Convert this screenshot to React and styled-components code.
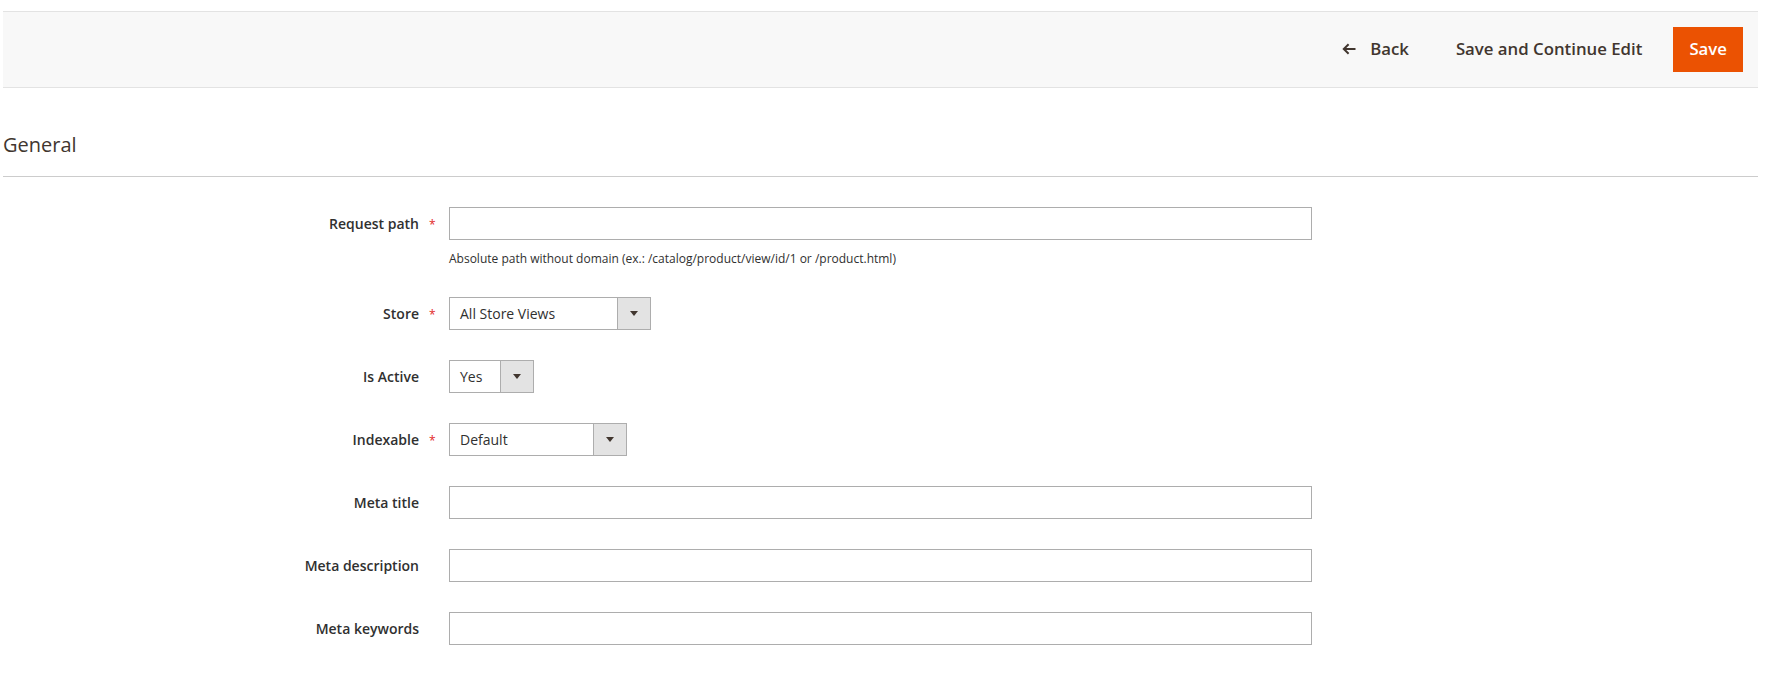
import React from "react";
import styled, { createGlobalStyle } from "styled-components";

const GlobalStyle = createGlobalStyle`
  html, body { margin: 0; padding: 0; background: #ffffff; }
  body {
    font-family: "Open Sans", "Noto Sans", Arial, sans-serif;
    color: #303030;
    font-size: 14px;
  }
  * { box-sizing: border-box; }
`;

const Page = styled.div`
  padding: 11px 11px 0 3px;
`;

const ActionsBar = styled.div`
  height: 77px;
  background: #f8f8f8;
  border-top: 1px solid #e3e3e3;
  border-bottom: 1px solid #e3e3e3;
  display: flex;
  align-items: center;
  justify-content: flex-end;
  gap: 15px;
  padding-right: 15px;
`;

const TextButton = styled.button`
  display: inline-flex;
  align-items: center;
  gap: 14px;
  border: 0;
  background: transparent;
  padding: 0 16px 2px;
  height: 45px;
  font-family: inherit;
  font-size: 16.8px;
  font-weight: 600;
  color: #41362f;
  cursor: pointer;
`;

const PrimaryButton = styled.button`
  height: 45px;
  border: 0;
  background: #eb5202;
  color: #ffffff;
  padding: 0 16px 2px;
  font-family: inherit;
  font-size: 16.8px;
  font-weight: 600;
  cursor: pointer;
`;

const SectionTitle = styled.h2`
  margin: 43px 0 0;
  padding: 0 0 17px;
  font-size: 20px;
  line-height: 28px;
  font-weight: 400;
  color: #41362f;
  border-bottom: 1px solid #cccccc;
`;

const Fieldset = styled.div`
  padding-top: 30px;
  display: flex;
  flex-direction: column;
  gap: 30px;
`;

const FieldRow = styled.div`
  display: grid;
  grid-template-columns: 416px 863px;
  column-gap: 30px;
  align-items: start;
`;

const Label = styled.label`
  text-align: right;
  font-size: 14px;
  font-weight: 600;
  color: #303030;
  line-height: 33px;
`;

const LabelText = styled.span`
  display: inline-block;
  position: relative;
  line-height: 33px;
  ${(p) =>
    p.$required &&
    `
    &::after {
      content: '*';
      position: absolute;
      left: calc(100% + 10px);
      top: 12px;
      font-size: 12px;
      line-height: 12px;
      font-weight: 400;
      color: #e22626;
    }
  `}
`;

const Control = styled.div`
  display: flex;
  flex-direction: column;
`;

const TextInput = styled.input`
  width: 100%;
  height: 33px;
  border: 1px solid #adadad;
  background: #ffffff;
  padding: 0 10px;
  font-family: inherit;
  font-size: 14px;
  color: #303030;
  outline: none;
`;

const Note = styled.div`
  margin-top: 10px;
  font-size: 12px;
  line-height: 17px;
  color: #303030;
`;

const SelectBox = styled.div`
  width: ${(p) => p.$width}px;
  height: 33px;
  border: 1px solid #adadad;
  background: #ffffff;
  display: flex;
  align-items: stretch;
`;

const SelectValue = styled.span`
  flex: 1;
  display: flex;
  align-items: center;
  padding: 0 10px;
  font-size: 14px;
  color: #303030;
  white-space: nowrap;
`;

const SelectArrow = styled.span`
  width: 33px;
  flex: none;
  background: #e3e3e3;
  border-left: 1px solid #adadad;
  display: flex;
  align-items: center;
  justify-content: center;
`;

function BackArrow() {
  return (
    <svg width="14" height="12" viewBox="0 0 14 12" fill="none">
      <path
        d="M13.5 6H2.2M6.6 1.3L1.8 6l4.8 4.7"
        stroke="#41362f"
        strokeWidth="2"
        strokeLinecap="butt"
        strokeLinejoin="miter"
      />
    </svg>
  );
}

function Caret() {
  return (
    <svg width="8" height="5" viewBox="0 0 8 5">
      <path d="M0 0h8L4 5z" fill="#41362f" />
    </svg>
  );
}

function Select({ value, width }) {
  return (
    <SelectBox $width={width}>
      <SelectValue>{value}</SelectValue>
      <SelectArrow>
        <Caret />
      </SelectArrow>
    </SelectBox>
  );
}

function Field({ label, required, children }) {
  return (
    <FieldRow>
      <Label>
        <LabelText $required={required}>{label}</LabelText>
      </Label>
      <Control>{children}</Control>
    </FieldRow>
  );
}

export default function App() {
  return (
    <>
      <GlobalStyle />
      <Page>
        <ActionsBar>
          <TextButton>
            <BackArrow />
            Back
          </TextButton>
          <TextButton>Save and Continue Edit</TextButton>
          <PrimaryButton>Save</PrimaryButton>
        </ActionsBar>

        <SectionTitle>General</SectionTitle>

        <Fieldset>
          <Field label="Request path" required>
            <TextInput type="text" />
            <Note>
              Absolute path without domain (ex.: /catalog/product/view/id/1 or
              /product.html)
            </Note>
          </Field>
          <Field label="Store" required>
            <Select value="All Store Views" width={202} />
          </Field>
          <Field label="Is Active">
            <Select value="Yes" width={85} />
          </Field>
          <Field label="Indexable" required>
            <Select value="Default" width={178} />
          </Field>
          <Field label="Meta title">
            <TextInput type="text" />
          </Field>
          <Field label="Meta description">
            <TextInput type="text" />
          </Field>
          <Field label="Meta keywords">
            <TextInput type="text" />
          </Field>
        </Fieldset>
      </Page>
    </>
  );
}
